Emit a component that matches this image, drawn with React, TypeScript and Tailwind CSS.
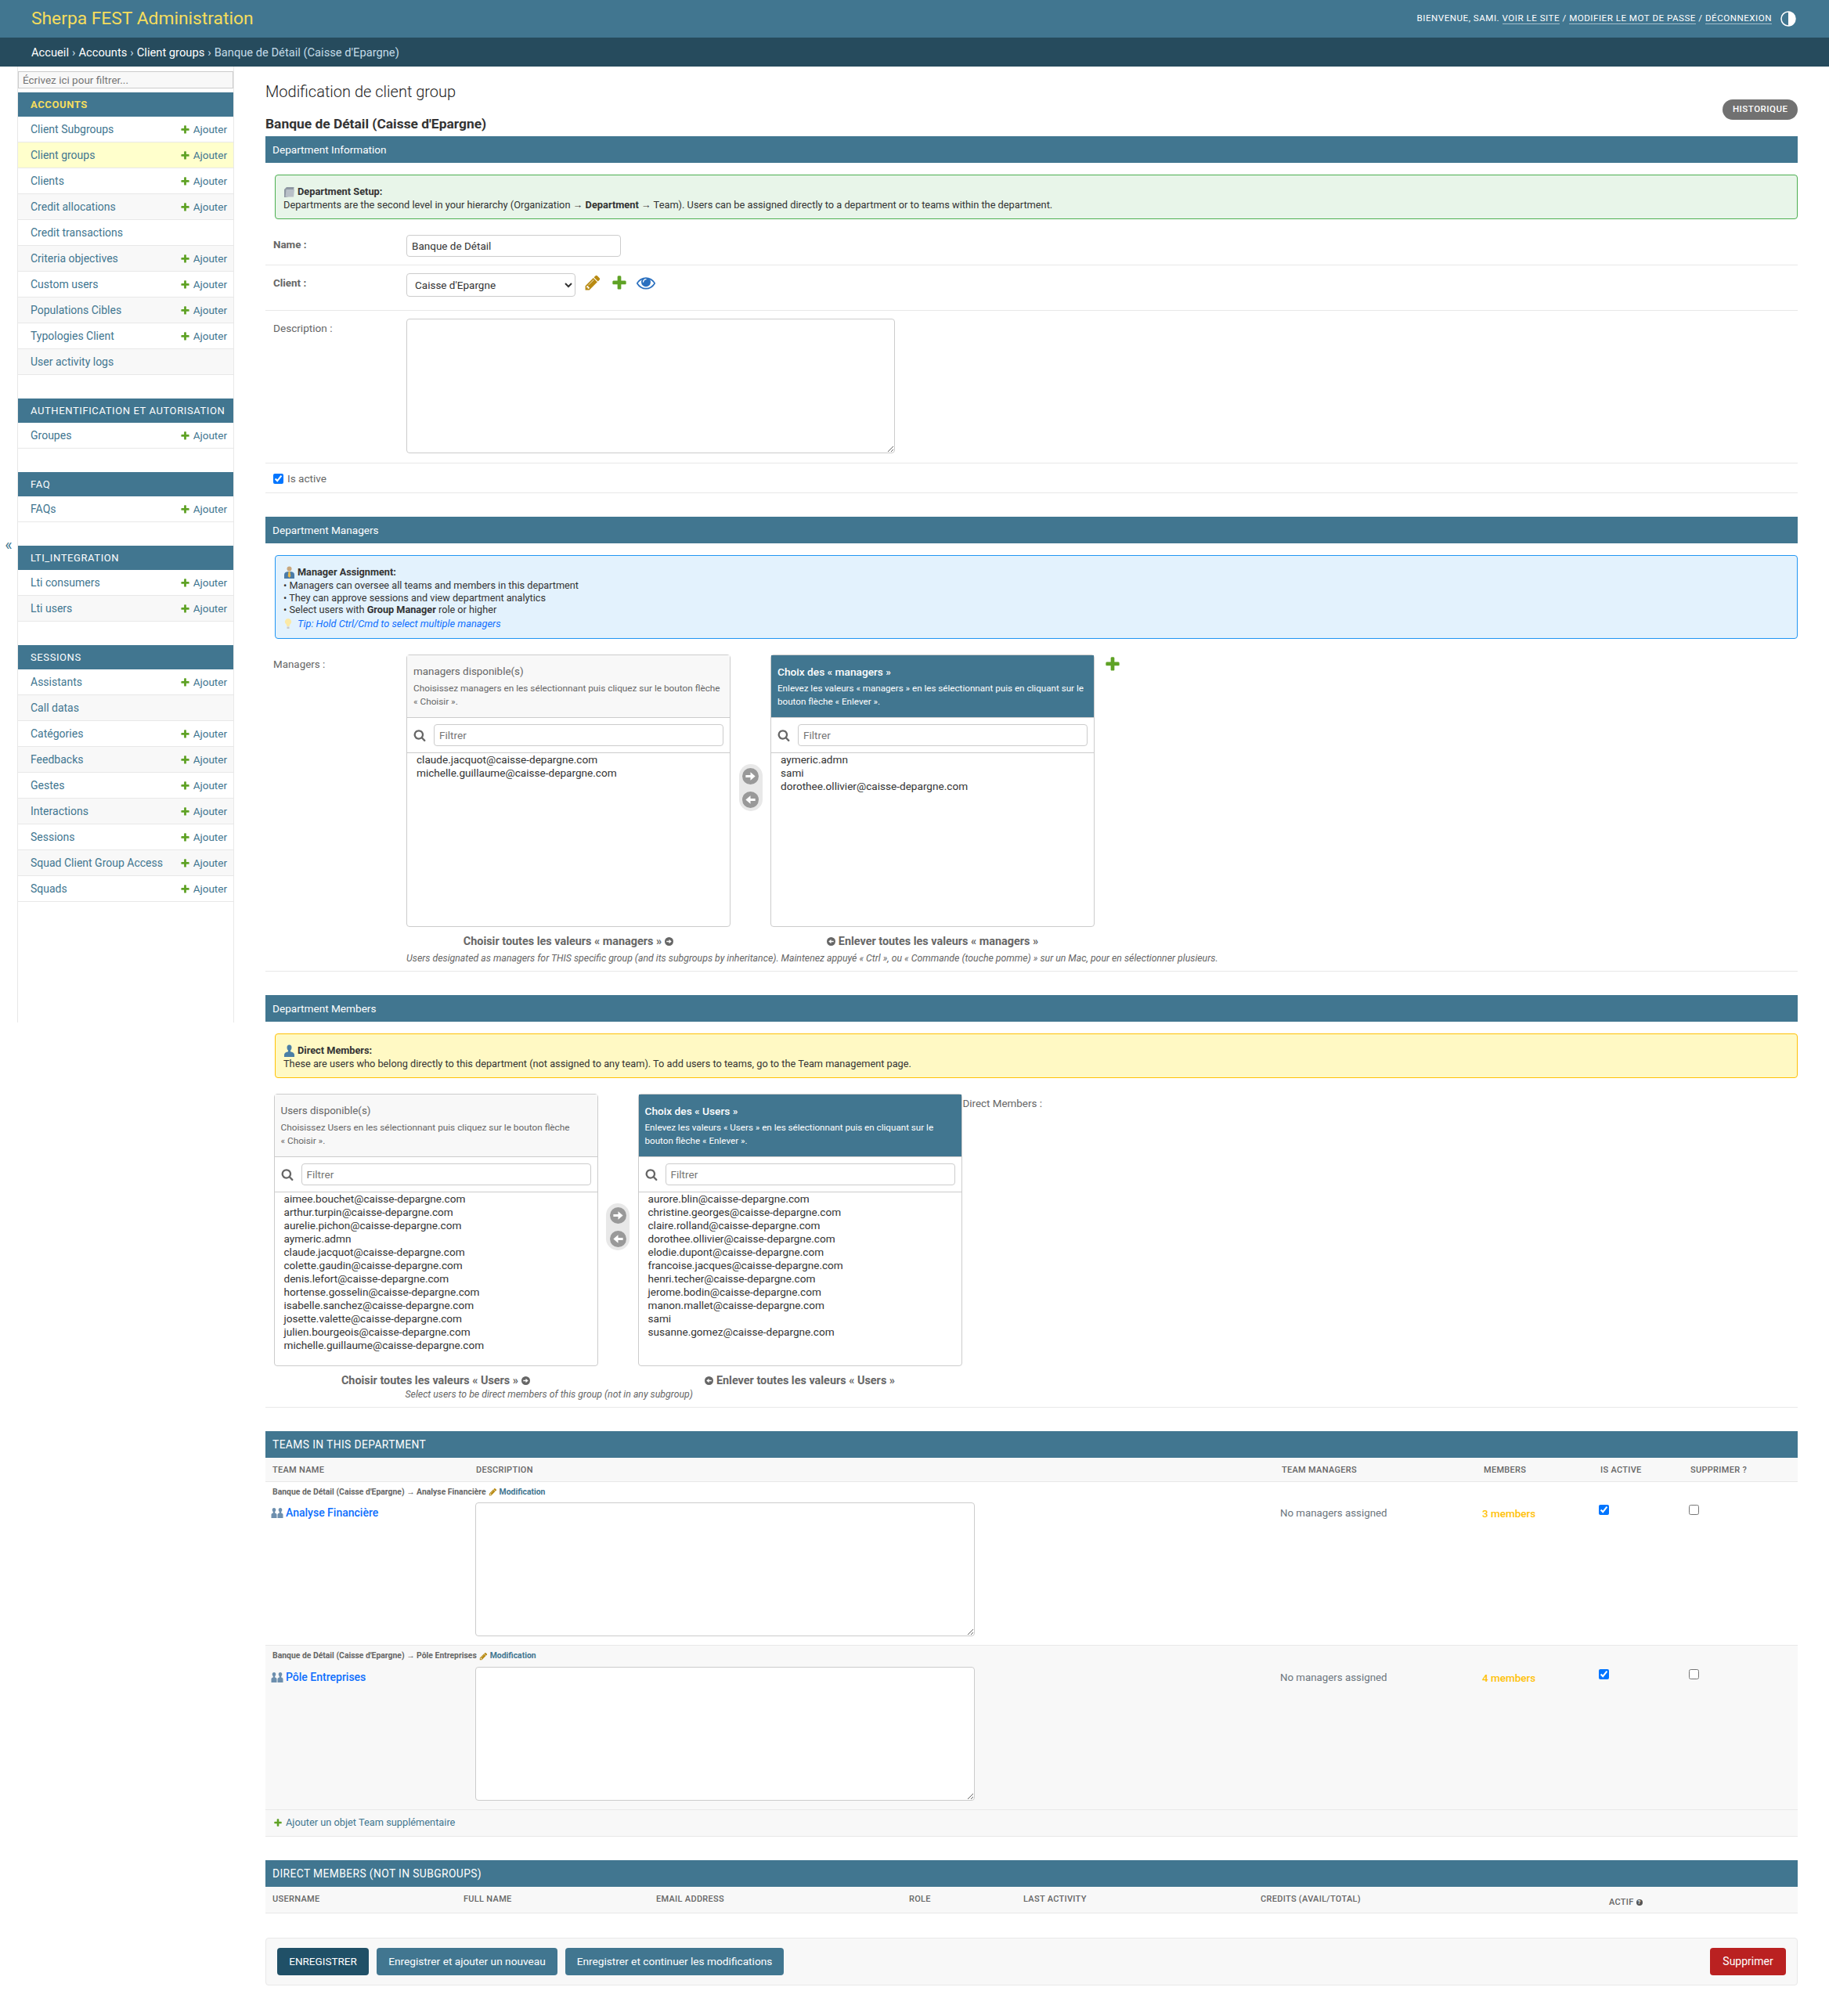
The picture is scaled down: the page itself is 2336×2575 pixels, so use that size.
import { ReactNode } from 'react';

const PLUS = 'M1600 796v192q0 40-28 68t-68 28h-416v416q0 40-28 68t-68 28h-192q-40 0-68-28t-28-68v-416h-416q-40 0-68-28t-28-68v-192q0-40 28-68t68-28h416v-416q0-40 28-68t68-28h192q40 0 68 28t28 68v416h416q40 0 68 28t28 68z';
const PENCIL = 'M491 1536l91-91-235-235-91 91v107h128v128h107zm523-928q0-22-22-22-10 0-17 7l-542 542q-7 7-7 17 0 22 22 22 10 0 17-7l542-542q7-7 7-17zm-54-192l416 416-832 832h-416v-416zm683 96q0 53-37 90l-166 166-416-416 166-165q36-38 90-38 53 0 91 38l235 234q37 39 37 91z';
const EYE = 'M1664 960q-152-236-381-353 61 104 61 225 0 185-131.5 316.5t-316.5 131.5-316.5-131.5-131.5-316.5q0-121 61-225-229 117-381 353 133 205 333.5 326.5t434.5 121.5 434.5-121.5 333.5-326.5zm-720-384q0-20-14-34t-34-14q-125 0-214.5 89.5t-89.5 214.5q0 20 14 34t34 14 34-14 14-34q0-86 61-147t147-61q20 0 34-14t14-34zm848 384q0 34-20 69-140 230-376.5 368.5t-499.5 138.5-499.5-139-376.5-368q-20-35-20-69t20-69q140-229 376.5-368t499.5-139 499.5 139 376.5 368q20 35 20 69z';
const SEARCH = 'M1216 832q0-185-131.5-316.5t-316.5-131.5-316.5 131.5-131.5 316.5 131.5 316.5 316.5 131.5 316.5-131.5 131.5-316.5zm512 832q0 52-38 90t-90 38q-54 0-90-38l-343-342q-179 124-399 124-143 0-273.5-55.5t-225-150-150-225-55.5-273.5 55.5-273.5 150-225 225-150 273.5-55.5 273.5 55.5 225 150 150 225 55.5 273.5q0 220-124 399l343 343q37 37 37 90z';

function Glyph({ d, size, color }: { d: string; size: number; color: string }) {
  return (
    <svg width={size} height={size} viewBox="0 0 1792 1792" className="shrink-0">
      <path d={d} fill={color} />
    </svg>
  );
}

function Arrow({ dir, size, color }: { dir: 'left' | 'right'; size: number; color: string }) {
  return (
    <svg width={size} height={size} viewBox="0 0 24 24" className="shrink-0">
      <circle cx="12" cy="12" r="12" fill={color} />
      {dir === 'right' ? (
        <path d="M5 10.2h7V6l7 6-7 6v-4.2H5z" fill="#fff" />
      ) : (
        <path d="M19 10.2h-7V6l-7 6 7 6v-4.2h7z" fill="#fff" />
      )}
    </svg>
  );
}

function FolderIcon() {
  return (
    <svg width="15" height="15" viewBox="0 0 15 15" className="shrink-0">
      <path d="M1 4l3-3h9.5l-1 10.5L3 14H1z" fill="#8f98a3" />
      <path d="M3.5 4H14l-1 9.5H2.5z" fill="#b9c0c8" />
    </svg>
  );
}

function ManagerIcon() {
  return (
    <svg width="15" height="16" viewBox="0 0 15 16" className="shrink-0">
      <circle cx="7.5" cy="3.5" r="3" fill="#c9a77c" />
      <path d="M1 16v-5q0-4 6.500-4t6.500 4v5z" fill="#4a7ba8" />
      <path d="M6.500 7h2l.8 6-1.800 2-1.800-2z" fill="#e8b84a" />
    </svg>
  );
}

function BulbIcon() {
  return (
    <svg width="12" height="15" viewBox="0 0 12 15" className="shrink-0">
      <path d="M6 1a4 4 0 0 0-2.500 7.200L4.500 11h3l1-2.800A4 4 0 0 0 6 1z" fill="#fbe9a6" />
      <rect x="4.500" y="11.500" width="3" height="2.500" fill="#c9c9c9" />
    </svg>
  );
}

function PersonIcon() {
  return (
    <svg width="15" height="16" viewBox="0 0 15 16" className="shrink-0">
      <path d="M7.500.5c2 0 3 1.500 3 3.500 0 1.500-.7 3-1.500 3.800v1.400c2.500.6 5 1.800 5 3.800v3H1v-3c0-2 2.500-3.200 5-3.800V7.800C5.200 7 4.500 5.500 4.500 4c0-2 1-3.500 3-3.500z" fill="#4b7fa6" />
    </svg>
  );
}

function PeopleIcon() {
  return (
    <svg width="16" height="13" viewBox="0 0 16 13" className="shrink-0">
      <path d="M4 0c1.500 0 2.300 1 2.300 2.500 0 1-.5 2-1.100 2.600v1.300c1.100.3 2.300.9 2.300 2.100V13H.500V8.500c0-1.200 1.200-1.800 2.300-2.100V5.100C2.200 4.500 1.700 3.500 1.700 2.500 1.700 1 2.500 0 4 0z" fill="#6d8fae" />
      <path d="M12 0c1.500 0 2.300 1 2.300 2.500 0 1-.5 2-1.100 2.600v1.300c1.100.3 2.300.9 2.300 2.100V13H8.500V8.500c0-1.200 1.200-1.800 2.300-2.100V5.100c-.6-.6-1.100-1.600-1.100-2.600C9.700 1 10.500 0 12 0z" fill="#6d8fae" />
    </svg>
  );
}

const modules = [
  {
    title: 'ACCOUNTS',
    rows: [
      ['Client Subgroups', true],
      ['Client groups', true],
      ['Clients', true],
      ['Credit allocations', true],
      ['Credit transactions', false],
      ['Criteria objectives', true],
      ['Custom users', true],
      ['Populations Cibles', true],
      ['Typologies Client', true],
      ['User activity logs', false],
    ],
  },
  { title: 'AUTHENTIFICATION ET AUTORISATION', rows: [['Groupes', true]] },
  { title: 'FAQ', rows: [['FAQs', true]] },
  { title: 'LTI_INTEGRATION', rows: [['Lti consumers', true], ['Lti users', true]] },
  {
    title: 'SESSIONS',
    rows: [
      ['Assistants', true],
      ['Call datas', false],
      ['Catégories', true],
      ['Feedbacks', true],
      ['Gestes', true],
      ['Interactions', true],
      ['Sessions', true],
      ['Squad Client Group Access', true],
      ['Squads', true],
    ],
  },
] as { title: string; rows: [string, boolean][] }[];

const availableMembers = [
  'aimee.bouchet@caisse-depargne.com',
  'arthur.turpin@caisse-depargne.com',
  'aurelie.pichon@caisse-depargne.com',
  'aymeric.admn',
  'claude.jacquot@caisse-depargne.com',
  'colette.gaudin@caisse-depargne.com',
  'denis.lefort@caisse-depargne.com',
  'hortense.gosselin@caisse-depargne.com',
  'isabelle.sanchez@caisse-depargne.com',
  'josette.valette@caisse-depargne.com',
  'julien.bourgeois@caisse-depargne.com',
  'michelle.guillaume@caisse-depargne.com',
];

const chosenMembers = [
  'aurore.blin@caisse-depargne.com',
  'christine.georges@caisse-depargne.com',
  'claire.rolland@caisse-depargne.com',
  'dorothee.ollivier@caisse-depargne.com',
  'elodie.dupont@caisse-depargne.com',
  'francoise.jacques@caisse-depargne.com',
  'henri.techer@caisse-depargne.com',
  'jerome.bodin@caisse-depargne.com',
  'manon.mallet@caisse-depargne.com',
  'sami',
  'susanne.gomez@caisse-depargne.com',
];

function Sidebar() {
  return (
    <div className="flex shrink-0">
      <div className="w-[22px] h-[1221px] flex items-center justify-center text-[#417690] text-[20px] leading-none">«</div>
      <nav className="w-[277px] h-[1221px] border-x border-[#e8e8e8]">
        <div className="h-[33px] pt-[5px]">
          <input
            placeholder="Écrivez ici pour filtrer..."
            className="w-full h-[22px] bg-[#f8f8f8] border border-[#ccc] px-[5px] text-[13.500px] outline-none placeholder:text-[#757575]"
          />
        </div>
        {modules.map((m) => {
          const current = m.title === 'ACCOUNTS';
          return (
            <div key={m.title} className="mb-[30px]">
              <div
                className={`h-[31px] bg-[#417690] pl-[16px] pt-[1px] flex items-center text-[13px] tracking-[0.6px] ${
                  current ? 'text-[#f5dd5d] font-bold' : 'text-white'
                }`}
              >
                {m.title}
              </div>
              {m.rows.map(([name, add], i) => (
                <div
                  key={name}
                  className={`h-[33px] pt-[1px] border-b border-[#e8e8e8] flex items-center justify-between pl-[16px] pr-[8px] text-[#417690] ${
                    name === 'Client groups' ? 'bg-[#ffffcc]' : i % 2 === 1 ? 'bg-[#f8f8f8]' : ''
                  }`}
                >
                  <span className="text-[14px]">{name}</span>
                  {add && (
                    <span className="flex items-center gap-[4px] text-[13.500px]">
                      <Glyph d={PLUS} size={13} color="#5fa225" />
                      Ajouter
                    </span>
                  )}
                </div>
              ))}
            </div>
          );
        })}
      </nav>
    </div>
  );
}

function Bar({ children, upper }: { children: ReactNode; upper?: boolean }) {
  return (
    <div className={`h-[34px] bg-[#417690] text-white flex items-center pl-[9px] pt-[1px] ${upper ? 'text-[13.800px] tracking-[0.4px]' : 'text-[13.600px]'}`}>{children}</div>
  );
}

function Selector({ title, help, items, chosen }: { title: string; help: string; items: string[]; chosen?: boolean }) {
  return (
    <div className="w-[414px] h-[348px] flex flex-col rounded-[4px] border border-[#ccc]">
      <div className={`h-[80px] shrink-0 px-[8px] pt-[12px] border-b border-[#ccc] ${chosen ? 'bg-[#417690] text-white' : 'bg-[#f8f8f8] text-[#666]'}`}>
        <div className={`leading-[18px] ${chosen ? 'font-medium text-[13.700px]' : 'text-[13.400px]'}`}>{title}</div>
        <div className={`leading-[16.500px] mt-[4px] whitespace-pre-line ${chosen ? 'text-[11.650px]' : 'text-[11.800px]'}`}>{help}</div>
      </div>
      <div className="h-[45px] shrink-0 border-b border-[#ccc] flex items-center pl-[8px] pr-[8px] gap-[10px]">
        <Glyph d={SEARCH} size={16} color="#666" />
        <input placeholder="Filtrer" className="flex-1 min-w-0 h-[28px] rounded-[4px] border border-[#ccc] px-[6px] text-[13.600px] outline-none placeholder:text-[#757575]" />
      </div>
      <div className="flex-1 pl-[12px] text-[13.600px] leading-[17px] text-[#333]">
        {items.map((it) => (
          <div key={it}>{it}</div>
        ))}
      </div>
    </div>
  );
}

function Transfer({ name, left, right }: { name: string; left: string[]; right: string[] }) {
  return (
    <div className="flex">
      <div className="w-[414px]">
        <Selector
          title={`${name} disponible(s)`}
          help={`Choisissez ${name} en les sélectionnant puis cliquez sur le bouton flèche\n« Choisir ».`}
          items={left}
        />
        <div className="h-[36px] pt-[1px] flex items-center justify-center gap-[4px] text-[#666] text-[14.400px] font-bold">
          Choisir toutes les valeurs « {name} »
          <Arrow dir="right" size={11} color="#666" />
        </div>
      </div>
      <div className="w-[30px] h-[60px] mx-[10.500px] mt-[140px] rounded-[15px] bg-[#e8e8e8] flex flex-col items-center justify-center gap-[9px]">
        <Arrow dir="right" size={21} color="#999" />
        <Arrow dir="left" size={21} color="#999" />
      </div>
      <div className="w-[414px]">
        <Selector
          chosen
          title={`Choix des « ${name} »`}
          help={`Enlevez les valeurs « ${name} » en les sélectionnant puis en cliquant sur le bouton flèche « Enlever ».`}
          items={right}
        />
        <div className="h-[36px] pt-[1px] flex items-center justify-center gap-[4px] text-[#666] text-[14.400px] font-bold">
          <Arrow dir="left" size={11} color="#666" />
          Enlever toutes les valeurs « {name} »
        </div>
      </div>
    </div>
  );
}

function TeamRows({ name, path, members, shaded }: { name: string; path: string; members: string; shaded?: boolean }) {
  const bg = shaded ? 'bg-[#f8f8f8]' : '';
  return (
    <>
      <tr className={bg}>
        <td colSpan={6} className="h-[27px] pl-[9px] text-[10.400px] font-bold text-[#666] leading-none">
          <span className="inline-flex items-center gap-[3px]">
            {path}
            <Glyph d={PENCIL} size={11} color="#b88a12" />
            <span className="text-[#417690]">Modification</span>
          </span>
        </td>
      </tr>
      <tr className={`${bg} border-b border-[#e8e8e8] align-top`}>
        <td className="pl-[7px] pt-[3px]">
          <span className="inline-flex items-center gap-[3px] text-[14px] font-medium text-[#0d6efd]">
            <PeopleIcon />
            {name}
          </span>
        </td>
        <td className="pl-[7px] pb-[11px]">
          <textarea className="block w-[638px] h-[171px] rounded-[4px] border border-[#ccc] bg-white outline-none" />
        </td>
        <td className="pl-[6px] pt-[4px] text-[13.300px] text-[#6c757d]">No managers assigned</td>
        <td className="pl-[6px] pt-[4px] text-[13.500px] font-medium text-[#ffc107]">{members}</td>
        <td className="pl-[6px] pt-[3px]">
          <input type="checkbox" defaultChecked className="block w-[13px] h-[13px]" />
        </td>
        <td className="pl-[6px] pt-[3px]">
          <input type="checkbox" className="block w-[13px] h-[13px]" />
        </td>
      </tr>
    </>
  );
}

export default function App() {
  return (
    <div className="min-h-screen bg-white text-[#333] font-['Roboto',sans-serif]">
      <header className="h-[48px] bg-[#417690] flex items-center justify-between pl-[40px] pr-[42px]">
        <div className="text-[22.800px] pt-[1px] text-[#f5dd5d]">Sherpa FEST Administration</div>
        <div className="flex items-center gap-[11px] text-[11.600px] tracking-[0.5px] text-[#fff]">
          <div>
            BIENVENUE, SAMI. <span className="border-b border-[#9fbccb]">VOIR LE SITE</span> / <span className="border-b border-[#9fbccb]">MODIFIER LE MOT DE PASSE</span> /{' '}
            <span className="border-b border-[#9fbccb]">DÉCONNEXION</span>
          </div>
          <svg width="20" height="20" viewBox="0 0 20 20">
            <circle cx="10" cy="10" r="9" fill="none" stroke="#fff" strokeWidth="1.500" />
            <path d="M10 1a9 9 0 0 1 0 18z" fill="#fff" />
          </svg>
        </div>
      </header>
      <div className="h-[37px] bg-[#264b5d] flex items-center pl-[40px] pt-[2px] text-[14.700px] text-[#c4dce8]">
        <span className="text-white">Accueil</span>
        <span className="mx-[4px]">›</span>
        <span className="text-white">Accounts</span>
        <span className="mx-[4px]">›</span>
        <span className="text-white">Client groups</span>
        <span className="mx-[4px]">›</span>
        <span>Banque de Détail (Caisse d'Epargne)</span>
      </div>

      <div className="flex">
        <Sidebar />
        <main className="flex-1 min-w-0 pl-[40px] pr-[40px] pb-[40px]">
          <div className="flex justify-between items-start h-[89px]">
            <div>
              <h1 className="text-[20px] font-light text-[#222] leading-[24px] mt-[20px]">Modification de client group</h1>
              <h2 className="text-[17.400px] font-bold text-[#333] leading-[20px] mt-[19px]">Banque de Détail (Caisse d'Epargne)</h2>
            </div>
            <div className="mt-[42px] h-[26px] px-[12.500px] rounded-[13px] bg-[#717171] text-white text-[11.500px] font-medium tracking-[0.5px] flex items-center">HISTORIQUE</div>
          </div>

          {/* Department information */}
          <Bar>Department Information</Bar>
          <div className="mt-[15px] ml-[12px] h-[57px] rounded-[4px] border border-[#4caf50] bg-[#e8f5e9] pl-[10px] pt-[13px] text-[12.800px] leading-[16.500px] text-[#333]">
            <div className="flex items-center gap-[3px] font-bold">
              <FolderIcon />
              Department Setup:
            </div>
            <div>
              Departments are the second level in your hierarchy (Organization → <b>Department</b> → Team). Users can be assigned directly to a department or to teams within the department.
            </div>
          </div>

          <div className="flex pt-[20px] pb-[10px] pl-[10px] border-b border-[#e8e8e8]">
            <label className="w-[170px] shrink-0 text-[13.400px] font-bold text-[#666] leading-[26px]">Name :</label>
            <input defaultValue="Banque de Détail" className="w-[274px] h-[28px] rounded-[4px] border border-[#ccc] px-[6px] text-[13.500px] text-[#333] outline-none" />
          </div>
          <div className="flex pt-[10px] pb-[17px] pl-[10px] border-b border-[#e8e8e8]">
            <label className="w-[170px] shrink-0 text-[13.400px] font-bold text-[#666] leading-[26px]">Client :</label>
            <select className="w-[216px] h-[30px] rounded-[4px] border border-[#ccc] pl-[6px] text-[13.500px] text-[#333] bg-white outline-none">
              <option>Caisse d'Epargne</option>
            </select>
            <div className="flex items-center h-[24px] ml-[11px] gap-[11.500px]">
              <Glyph d={PENCIL} size={22} color="#b88a12" />
              <Glyph d={PLUS} size={22} color="#5fa225" />
              <Glyph d={EYE} size={24} color="#2b70bf" />
            </div>
          </div>
          <div className="flex pt-[10px] pb-[12px] pl-[10px] border-b border-[#e8e8e8]">
            <label className="w-[170px] shrink-0 text-[13.600px] text-[#666] leading-[24px]">Description :</label>
            <textarea className="block w-[624px] h-[172px] rounded-[4px] border border-[#ccc] outline-none" />
          </div>
          <div className="flex items-center h-[38px] pl-[10px] pt-[1px] gap-[5px] border-b border-[#e8e8e8] text-[13.600px] text-[#666]">
            <input type="checkbox" defaultChecked className="w-[13px] h-[13px]" />
            <span>Is active</span>
          </div>

          {/* Managers */}
          <div className="mt-[30px]">
            <Bar>Department Managers</Bar>
          </div>
          <div className="mt-[15px] ml-[12px] h-[107px] rounded-[4px] border border-[#2196f3] bg-[#e3f2fd] pl-[10px] pt-[12px] text-[12.700px] leading-[15.500px] text-[#333]">
            <div className="flex items-center gap-[3px] font-bold h-[17px]">
              <ManagerIcon />
              Manager Assignment:
            </div>
            <div className="mt-[1px]">• Managers can oversee all teams and members in this department</div>
            <div>• They can approve sessions and view department analytics</div>
            <div>
              • Select users with <b>Group Manager</b> role or higher
            </div>
            <div className="flex items-center gap-[6px] italic text-[12.800px] text-[#0d6efd] mt-[2px]">
              <BulbIcon />
              Tip: Hold Ctrl/Cmd to select multiple managers
            </div>
          </div>
          <div className="border-b border-[#e8e8e8] pt-[20px] pb-[8px] pl-[10px]">
            <div className="flex">
              <label className="w-[170px] shrink-0 text-[13.400px] text-[#666] pt-[3px]">Managers :</label>
              <div>
                <div className="flex">
                  <Transfer
                    name="managers"
                    left={['claude.jacquot@caisse-depargne.com', 'michelle.guillaume@caisse-depargne.com']}
                    right={['aymeric.admn', 'sami', 'dorothee.ollivier@caisse-depargne.com']}
                  />
                  <div className="ml-[12px] mt-[1px]">
                    <Glyph d={PLUS} size={22} color="#5fa225" />
                  </div>
                </div>
                <div className="text-[12.300px] italic text-[#666] leading-[16px] mt-[-4px]">
                  Users designated as managers for THIS specific group (and its subgroups by inheritance). Maintenez appuyé « Ctrl », ou « Commande (touche pomme) » sur un Mac, pour en sélectionner plusieurs.
                </div>
              </div>
            </div>
          </div>

          {/* Members */}
          <div className="mt-[30px]">
            <Bar>Department Members</Bar>
          </div>
          <div className="mt-[15px] ml-[12px] h-[57px] rounded-[4px] border border-[#ffc107] bg-[#fff9c4] pl-[10px] pt-[13px] text-[12.750px] leading-[16.500px] text-[#333]">
            <div className="flex items-center gap-[3px] font-bold">
              <PersonIcon />
              Direct Members:
            </div>
            <div>These are users who belong directly to this department (not assigned to any team). To add users to teams, go to the Team management page.</div>
          </div>
          <div className="border-b border-[#e8e8e8] pt-[20px] pb-[8px] pl-[10.500px]">
            <div className="flex">
              <Transfer name="Users" left={availableMembers} right={chosenMembers} />
              <label className="text-[13.400px] text-[#666] ml-[1px] pt-[3px]">Direct Members :</label>
            </div>
            <div className="text-[12.300px] italic text-[#666] leading-[16px] ml-[168px] mt-[-8px]">Select users to be direct members of this group (not in any subgroup)</div>
          </div>

          {/* Teams */}
          <div className="mt-[30px]">
            <Bar upper>TEAMS IN THIS DEPARTMENT</Bar>
          </div>
          <table className="w-full table-fixed border-collapse">
            <colgroup>
              <col className="w-[261px]" />
              <col className="w-[1029px]" />
              <col className="w-[258px]" />
              <col className="w-[149px]" />
              <col className="w-[115px]" />
              <col />
            </colgroup>
            <thead>
              <tr className="h-[30px] bg-[#f8f8f8] border-b border-[#e8e8e8] text-left text-[11px] tracking-[0.3px] text-[#666]">
                <th className="pl-[9px] pt-[2px] font-medium">TEAM NAME</th>
                <th className="pl-[8px] pt-[2px] font-medium">DESCRIPTION</th>
                <th className="pl-[8px] pt-[2px] font-medium">TEAM MANAGERS</th>
                <th className="pl-[8px] pt-[2px] font-medium">MEMBERS</th>
                <th className="pl-[8px] pt-[2px] font-medium">IS ACTIVE</th>
                <th className="pl-[8px] pt-[2px] font-medium">SUPPRIMER ?</th>
              </tr>
            </thead>
            <tbody>
              <TeamRows name="Analyse Financière" path="Banque de Détail (Caisse d'Epargne) → Analyse Financière" members="3 members" />
              <TeamRows shaded name="Pôle Entreprises" path="Banque de Détail (Caisse d'Epargne) → Pôle Entreprises" members="4 members" />
            </tbody>
          </table>
          <div className="h-[34px] bg-[#f8f8f8] border-b border-[#e8e8e8] flex items-center pl-[10px] gap-[4px] text-[12.800px] text-[#417690]">
            <Glyph d={PLUS} size={12} color="#5fa225" />
            Ajouter un objet Team supplémentaire
          </div>

          {/* Direct members */}
          <div className="mt-[30px]">
            <Bar upper>DIRECT MEMBERS (NOT IN SUBGROUPS)</Bar>
          </div>
          <table className="w-full table-fixed border-collapse">
            <colgroup>
              <col className="w-[245px]" />
              <col className="w-[246px]" />
              <col className="w-[323px]" />
              <col className="w-[146px]" />
              <col className="w-[303px]" />
              <col className="w-[445px]" />
              <col />
            </colgroup>
            <thead>
              <tr className="h-[34px] bg-[#f8f8f8] border-b border-[#e8e8e8] text-left text-[11px] tracking-[0.3px] text-[#666]">
                <th className="pl-[9px] font-medium">USERNAME</th>
                <th className="pl-[8px] font-medium">FULL NAME</th>
                <th className="pl-[8px] font-medium">EMAIL ADDRESS</th>
                <th className="pl-[8px] font-medium">ROLE</th>
                <th className="pl-[8px] font-medium">LAST ACTIVITY</th>
                <th className="pl-[8px] font-medium">CREDITS (AVAIL/TOTAL)</th>
                <th className="pl-[8px] pt-[8px] font-medium">
                  <span className="inline-flex items-center gap-[3px]">
                    ACTIF
                    <span className="w-[8px] h-[8px] rounded-full bg-[#555] text-white text-[7px] leading-[8px] text-center font-bold">?</span>
                  </span>
                </th>
              </tr>
            </thead>
          </table>

          <div className="mt-[31px] h-[61px] rounded-[4px] border border-[#e8e8e8] bg-[#f8f8f8] flex items-center justify-between pl-[14px] pr-[14px]">
            <div className="flex gap-[10px]">
              <button className="h-[35px] w-[117px] rounded-[4px] bg-[#205067] text-white text-[13.500px]">ENREGISTRER</button>
              <button className="h-[35px] w-[231px] rounded-[4px] bg-[#417690] text-white text-[13.700px]">Enregistrer et ajouter un nouveau</button>
              <button className="h-[35px] w-[279px] rounded-[4px] bg-[#417690] text-white text-[13.700px]">Enregistrer et continuer les modifications</button>
            </div>
            <button className="h-[35px] w-[97px] rounded-[4px] bg-[#ba2121] text-white text-[14px]">Supprimer</button>
          </div>
        </main>
      </div>
    </div>
  );
}
